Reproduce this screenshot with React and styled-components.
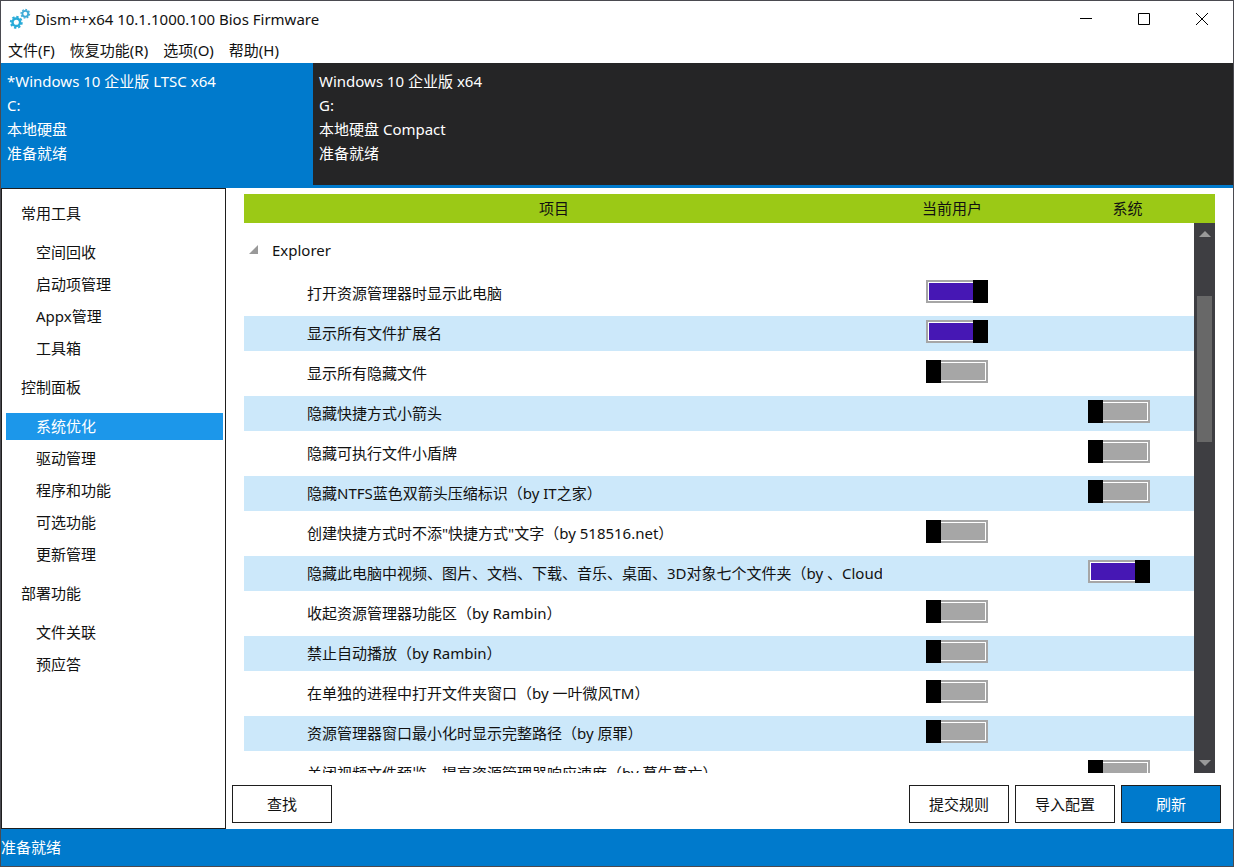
/**
 * @file Dism++ 主窗口
 */
import React, { useState } from 'react';
import styled, { createGlobalStyle, css } from 'styled-components';

const GlobalStyle = createGlobalStyle`
  * { box-sizing: border-box; }
  body {
    margin: 0;
    background: #fff;
    color: #111;
    font: 15px/24px "Noto Sans", "Noto Sans CJK SC", sans-serif;
  }
  button, input { font: inherit; color: inherit; margin: 0; }
`;

// 窗口
const Window = styled.div`
  display: flex;
  flex-direction: column;
  height: 100vh;
  min-height: 560px;
  border: 1px solid #4a4a50;
  overflow: hidden;
`;

// 标题栏
const TitleBar = styled.header`
  display: flex;
  align-items: center;
  height: 35px;
  flex: none;
  padding: 0 2px 0 8px;
`;
const Title = styled.h1`
  flex: 1;
  margin: 0 0 0 4px;
  font-size: 15px;
  font-weight: inherit;
`;
const CaptionButton = styled.button`
  display: grid;
  place-items: center;
  width: 58px;
  height: 34px;
  padding: 0;
  border: 0;
  background: none;
`;

// 菜单
const MenuBar = styled.nav`
  display: flex;
  flex: none;
  height: 27px;
  gap: 15px;
  padding-left: 7px;
`;
const MenuButton = styled.button`
  padding: 0;
  border: 0;
  background: none;
  white-space: nowrap;
`;

// 系统映像列表
const ImageBar = styled.section`
  display: flex;
  flex: none;
  height: 125px;
  background: #252526;
  border-bottom: 3px solid #007acc;
`;
const ImageTab = styled.button`
  width: 312px;
  padding: 6px 6px 0;
  border: 0;
  background: ${(p) => (p.$active ? '#007acc' : 'transparent')};
  color: #fff;
  text-align: left;
  display: flex;
  flex-direction: column;
`;

const Body = styled.div`
  display: flex;
  flex: 1;
  min-height: 0;
`;

// 侧边栏
const Sidebar = styled.nav`
  flex: none;
  width: 225px;
  padding: 1px 2px 0 4px;
  border: 1px solid #1e1e1e;
`;
const GroupTitle = styled.h2`
  margin: 0;
  padding-left: 15px;
  font-size: 15px;
  font-weight: inherit;
  line-height: 46px;
`;
const NavItem = styled.button`
  display: block;
  width: 100%;
  height: 27px;
  margin: 3px 0 5px;
  padding: 0 0 2px 30px;
  border: 0;
  background: ${(p) => (p.$active ? '#1c97ea' : 'none')};
  color: ${(p) => (p.$active ? '#fff' : 'inherit')};
  text-align: left;
  & + & { margin-top: 0; }
`;
const NavGroup = styled.div`
  margin-bottom: -3px;
`;

// 优化项目
const Main = styled.main`
  display: flex;
  flex: 1;
  flex-direction: column;
  min-width: 0;
  padding: 6px 12px 6px 6px;
`;
const ListArea = styled.div`
  display: grid;
  grid-template: 29px minmax(0, 1fr) / minmax(0, 1fr) 21px;
  flex: 1;
  min-height: 0;
  margin: 0 6px 12px 12px;
`;
const Table = styled.table`
  display: contents;
`;
const Head = styled.thead`
  display: block;
  grid-column: 1 / 3;
  background: #9bc916;
`;
const HeadRow = styled.tr`
  display: grid;
  grid-template-columns: minmax(0, 1fr) 176px 175px;
`;
const HeadCell = styled.th`
  padding: 0;
  font-weight: inherit;
  line-height: 29px;
`;
const Rows = styled.tbody`
  display: block;
  overflow-y: auto;
  scrollbar-width: none;
`;
const GroupRow = styled.tr`
  display: flex;
  height: 53px;
`;
const GroupCell = styled.th`
  display: flex;
  align-items: center;
  gap: 14px;
  padding: 0 0 0 5px;
  font-weight: inherit;
`;
const Row = styled.tr`
  display: grid;
  grid-template-columns: minmax(0, 1fr) 162px 106px;
  height: 35px;
  margin-bottom: 5px;
  padding-left: 63px;
  ${(p) => p.$striped && css`background: #cce8fa;`}
`;
const NameCell = styled.td`
  margin-right: 44px;
  padding: 0;
  line-height: 35px;
  white-space: nowrap;
  overflow: hidden;
`;
const SwitchCell = styled.td`
  padding: 4px 0 0;
  line-height: 0;
`;
const Switch = styled.input`
  appearance: none;
  position: relative;
  width: 62px;
  height: 23px;
  padding: 1px;
  border: 2px solid #a6a6a6;
  background: linear-gradient(#a6a6a6, #a6a6a6) content-box, #fff;
  &::before {
    content: '';
    position: absolute;
    top: -2px;
    left: -2px;
    width: 15px;
    height: 23px;
    background: #000;
  }
  &:checked {
    background: linear-gradient(#4617b4, #4617b4) content-box, #fff;
  }
  &:checked::before {
    left: auto;
    right: -2px;
  }
`;

// 滚动条
const ScrollBar = styled.div`
  display: flex;
  flex-direction: column;
  padding: 0 3px;
  background: #3e3e42;
`;
const ScrollButton = styled.button`
  display: grid;
  place-items: center;
  flex: none;
  height: 21px;
  padding: 0;
  border: 0;
  background: none;
`;
const ScrollTrack = styled.div`
  flex: 1;
  padding-top: 52px;
`;
const ScrollThumb = styled.div`
  height: 32%;
  background: #686868;
`;

// 底部按钮
const Actions = styled.div`
  display: flex;
  flex: none;
  gap: 6px;
`;
const ActionButton = styled.button`
  width: 100px;
  height: 38px;
  padding: 0;
  border: 1px solid #1e1e1e;
  background: ${(p) => (p.$primary ? '#007acc' : '#fff')};
  color: ${(p) => (p.$primary ? '#fff' : 'inherit')};
  &:first-child { margin-right: auto; }
`;
const StatusBar = styled.footer`
  flex: none;
  height: 37px;
  background: #007acc;
  color: #fff;
  line-height: 37px;
`;

const menus = ['文件(F)', '恢复功能(R)', '选项(O)', '帮助(H)'];

const images = [
  ['*Windows 10 企业版 LTSC x64', 'C:', '本地硬盘', '准备就绪'],
  ['Windows 10 企业版 x64', 'G:', '本地硬盘 Compact', '准备就绪'],
];

const groups = [
  { title: '常用工具', items: ['空间回收', '启动项管理', 'Appx管理', '工具箱'] },
  { title: '控制面板', items: ['系统优化', '驱动管理', '程序和功能', '可选功能', '更新管理'] },
  { title: '部署功能', items: ['文件关联', '预应答'] },
];

const rules = [
  { name: '打开资源管理器时显示此电脑', scope: 'user', on: true },
  { name: '显示所有文件扩展名', scope: 'user', on: true },
  { name: '显示所有隐藏文件', scope: 'user' },
  { name: '隐藏快捷方式小箭头', scope: 'system' },
  { name: '隐藏可执行文件小盾牌', scope: 'system' },
  { name: '隐藏NTFS蓝色双箭头压缩标识（by IT之家）', scope: 'system' },
  { name: '创建快捷方式时不添"快捷方式"文字（by 518516.net）', scope: 'user' },
  { name: '隐藏此电脑中视频、图片、文档、下载、音乐、桌面、3D对象七个文件夹（by 、Cloud）', scope: 'system', on: true },
  { name: '收起资源管理器功能区（by Rambin）', scope: 'user' },
  { name: '禁止自动播放（by Rambin）', scope: 'user' },
  { name: '在单独的进程中打开文件夹窗口（by 一叶微风TM）', scope: 'user' },
  { name: '资源管理器窗口最小化时显示完整路径（by 原罪）', scope: 'user' },
  { name: '关闭视频文件预览，提高资源管理器响应速度（by 暮生暮亡）', scope: 'system' },
];

// 单个齿轮，齿用虚线圆描出
const Gear = ({ cx, cy, r, color }) => (
  <g fill="none" stroke={color}>
    <circle cx={cx} cy={cy} r={r} strokeWidth={r * 0.65} />
    <circle cx={cx} cy={cy} r={r * 1.45} strokeWidth={r * 0.5} pathLength="16" strokeDasharray="1.1 0.9" />
  </g>
);

const Logo = () => (
  <svg width="22" height="22" viewBox="0 0 22 22" aria-hidden="true">
    <Gear cx={7.3} cy={14.3} r={3.8} color="#28abd8" />
    <Gear cx={16.3} cy={5.8} r={2.9} color="#3fabd6" />
  </svg>
);

const RuleRow = ({ rule, striped }) => {
  const [on, setOn] = useState(Boolean(rule.on));
  const control = (
    <Switch type="checkbox" aria-label={rule.name} checked={on} onChange={() => setOn(!on)} />
  );

  return (
    <Row $striped={striped}>
      <NameCell>{rule.name}</NameCell>
      <SwitchCell>{rule.scope === 'user' && control}</SwitchCell>
      <SwitchCell>{rule.scope === 'system' && control}</SwitchCell>
    </Row>
  );
};

const App = () => {
  const [page, setPage] = useState('系统优化');
  const [image, setImage] = useState(0);

  return (
    <Window>
      <GlobalStyle />
      <TitleBar>
        <Logo />
        <Title>Dism++x64 10.1.1000.100 Bios Firmware</Title>
        <CaptionButton aria-label="最小化">
          <svg width="12" height="12"><path d="M0 5.5H12" stroke="#000" /></svg>
        </CaptionButton>
        <CaptionButton aria-label="最大化">
          <svg width="12" height="12"><path d="M.5 .5H11.5V11.5H.5Z" fill="none" stroke="#000" /></svg>
        </CaptionButton>
        <CaptionButton aria-label="关闭">
          <svg width="12" height="12"><path d="M0 0L12 12M12 0L0 12" stroke="#000" /></svg>
        </CaptionButton>
      </TitleBar>
      <MenuBar>
        {menus.map((text) => <MenuButton key={text}>{text}</MenuButton>)}
      </MenuBar>
      <ImageBar>
        {images.map((lines, i) => (
          <ImageTab key={lines[1]} $active={i === image} onClick={() => setImage(i)}>
            {lines.map((line) => <span key={line}>{line}</span>)}
          </ImageTab>
        ))}
      </ImageBar>
      <Body>
        <Sidebar>
          {groups.map((group) => (
            <NavGroup key={group.title}>
              <GroupTitle>{group.title}</GroupTitle>
              {group.items.map((item) => (
                <NavItem key={item} $active={item === page} onClick={() => setPage(item)}>{item}</NavItem>
              ))}
            </NavGroup>
          ))}
        </Sidebar>
        <Main>
          <ListArea>
            <Table>
              <Head>
                <HeadRow>
                  <HeadCell>项目</HeadCell>
                  <HeadCell>当前用户</HeadCell>
                  <HeadCell>系统</HeadCell>
                </HeadRow>
              </Head>
              <Rows>
                <GroupRow>
                  <GroupCell>
                    <svg width="9" height="9" aria-hidden="true"><path d="M9 0V9H0Z" fill="#999" /></svg>
                    Explorer
                  </GroupCell>
                </GroupRow>
                {rules.map((rule, i) => <RuleRow key={rule.name} rule={rule} striped={i % 2 === 1} />)}
              </Rows>
            </Table>
            <ScrollBar>
              <ScrollButton aria-label="向上滚动">
                <svg width="12" height="6"><path d="M6 0L12 6H0Z" fill="#999" /></svg>
              </ScrollButton>
              <ScrollTrack>
                <ScrollThumb />
              </ScrollTrack>
              <ScrollButton aria-label="向下滚动">
                <svg width="12" height="6"><path d="M0 0H12L6 6Z" fill="#999" /></svg>
              </ScrollButton>
            </ScrollBar>
          </ListArea>
          <Actions>
            <ActionButton>查找</ActionButton>
            <ActionButton>提交规则</ActionButton>
            <ActionButton>导入配置</ActionButton>
            <ActionButton $primary>刷新</ActionButton>
          </Actions>
        </Main>
      </Body>
      <StatusBar>准备就绪</StatusBar>
    </Window>
  );
};

export default App;
